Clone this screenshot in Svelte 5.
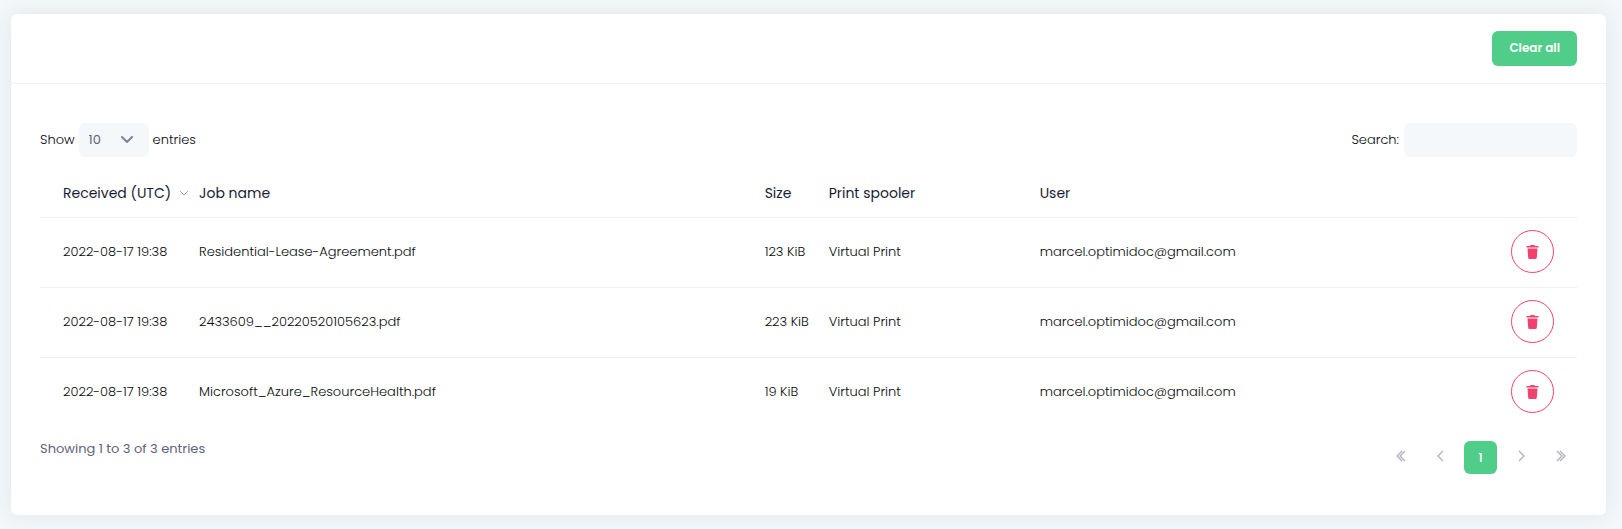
<script lang="ts">
  type Job = { received: string; name: string; size: string; spooler: string; user: string }

  let jobs: Job[] = [
    {
      received: '2022-08-17 19:38',
      name: 'Residential-Lease-Agreement.pdf',
      size: '123 KiB',
      spooler: 'Virtual Print',
      user: 'marcel.optimidoc@gmail.com',
    },
    {
      received: '2022-08-17 19:38',
      name: '2433609__20220520105623.pdf',
      size: '223 KiB',
      spooler: 'Virtual Print',
      user: 'marcel.optimidoc@gmail.com',
    },
    {
      received: '2022-08-17 19:38',
      name: 'Microsoft_Azure_ResourceHealth.pdf',
      size: '19 KiB',
      spooler: 'Virtual Print',
      user: 'marcel.optimidoc@gmail.com',
    },
  ]
  let search = ''
  let pageSize = 10

  $: filtered = jobs.filter((job) => job.name.toLowerCase().includes(search.toLowerCase()))
  $: shown = filtered.slice(0, pageSize)

  const removeJob = (job: Job) => {
    jobs = jobs.filter((j) => j !== job)
  }
</script>

<main class="card">
  <header class="card_header">
    <button class="clear_btn" on:click={() => (jobs = [])}>Clear all</button>
  </header>

  <div class="card_body">
    <div class="toolbar">
      <label class="length">
        Show
        <select bind:value={pageSize}>
          <option value={10}>10</option>
          <option value={25}>25</option>
          <option value={50}>50</option>
        </select>
        entries
      </label>
      <label class="search">
        Search:
        <input type="search" bind:value={search} />
      </label>
    </div>

    <table>
      <thead>
        <tr>
          <th class="received">
            <span class="sorted">
              Received (UTC)
              <svg width="10" height="6" viewBox="0 0 10 6"><path d="M1 1l4 4 4-4" /></svg>
            </span>
          </th>
          <th>Job name</th>
          <th class="size">Size</th>
          <th class="spooler">Print spooler</th>
          <th class="user">User</th>
          <th class="actions"></th>
        </tr>
      </thead>
      <tbody>
        {#each shown as job}
          <tr>
            <td class="received">{job.received}</td>
            <td>{job.name}</td>
            <td>{job.size}</td>
            <td>{job.spooler}</td>
            <td>{job.user}</td>
            <td class="actions">
              <button class="delete_btn" aria-label="Delete" on:click={() => removeJob(job)}>
                <svg width="13" height="14" viewBox="0 0 13 14">
                  <path d="M4.5 0h4l.5 1h3.5v1.5H.5V1H4z" />
                  <path d="M1.5 3.5h10l-.7 9a1.5 1.5 0 0 1-1.5 1.5H3.7a1.5 1.5 0 0 1-1.5-1.5z" />
                </svg>
              </button>
            </td>
          </tr>
        {/each}
      </tbody>
    </table>

    <footer class="table_footer">
      <span class="info">Showing 1 to {shown.length} of {filtered.length} entries</span>
      <nav class="pager">
        <button aria-label="First page" disabled>
          <svg width="10" height="12" viewBox="0 0 10 12"><path d="M6 1L1 6l5 5M9 1L4 6l5 5" /></svg>
        </button>
        <button aria-label="Previous page" disabled>
          <svg width="10" height="12" viewBox="0 0 10 12"><path d="M7 1L2 6l5 5" /></svg>
        </button>
        <button class="active">1</button>
        <button aria-label="Next page" disabled>
          <svg width="10" height="12" viewBox="0 0 10 12"><path d="M3 1l5 5-5 5" /></svg>
        </button>
        <button aria-label="Last page" disabled>
          <svg width="10" height="12" viewBox="0 0 10 12"><path d="M1 1l5 5-5 5M4 1l5 5-5 5" /></svg>
        </button>
      </nav>
    </footer>
  </div>
</main>

<style>
  :global(body) {
    background-color: #f3f7fa;
    font-family: Poppins, Inter, 'Open Sans', sans-serif;
    font-size: 13px;
    font-weight: 300;
    color: #070a0d;
  }
  button,
  select,
  input {
    font-family: inherit;
    font-size: 13px;
    border: none;
    border-radius: 6px;
    box-sizing: border-box;
  }
  button {
    display: inline-flex;
    align-items: center;
    justify-content: center;
    padding: 0;
    cursor: pointer;
  }
  .card {
    margin: 14px 16px 13px 11px;
    background-color: #fff;
    border-radius: 6px;
    box-shadow: 0 0 20px rgba(56, 71, 83, 0.09);
  }
  .card_header {
    display: flex;
    justify-content: flex-end;
    padding: 17px 29px;
    border-bottom: 1px solid #eff0f2;
  }
  .clear_btn {
    height: 35px;
    padding: 0 17px 2px;
    background-color: #50cd89;
    color: #fff;
    font-size: 12px;
    font-weight: 600;
  }
  .card_body {
    padding: 39px 29px 41px;
  }
  .toolbar {
    display: flex;
    justify-content: space-between;
  }
  .length,
  .search {
    display: flex;
    align-items: center;
    gap: 5px;
  }
  .length {
    gap: 4px;
  }
  select {
    appearance: none;
    width: 70px;
    height: 34px;
    padding: 0 10px 1px;
    color: #5e6278;
    background: #f5f8fa
      url("data:image/svg+xml,%3Csvg xmlns='http://www.w3.org/2000/svg' width='12' height='8' viewBox='0 0 12 8' fill='none' stroke='%237e8299' stroke-width='2' stroke-linecap='round' stroke-linejoin='round'%3E%3Cpath d='M1 1l5 5 5-5'/%3E%3C/svg%3E")
      no-repeat right 16px center;
  }
  input {
    width: 173px;
    height: 34px;
    padding: 0 10px;
    background-color: #f5f8fa;
  }
  table {
    width: 100%;
    table-layout: fixed;
    border-spacing: 0;
    margin-top: 12px;
  }
  th {
    height: 48px;
    padding: 0;
    font-size: 14px;
    font-weight: 400;
    text-align: left;
    color: #181c32;
    white-space: nowrap;
  }
  td {
    height: 67px;
    padding: 0 0 2px;
    border-top: 1px solid #eff0f2;
  }
  .received {
    width: 136px;
    padding-left: 23px;
  }
  .size {
    width: 64px;
  }
  .spooler {
    width: 211px;
  }
  .user {
    width: 28%;
  }
  .actions {
    width: 84px;
    padding-right: 23px;
    text-align: right;
  }
  .sorted {
    display: flex;
    align-items: center;
    gap: 8px;
  }
  .sorted svg,
  .pager svg {
    fill: none;
    stroke: #a9a9b8;
  }
  .pager svg {
    margin-bottom: 4px;
    stroke: #b0b0bf;
    stroke-width: 1.3;
  }
  .delete_btn {
    width: 43px;
    height: 43px;
    border: 1px solid #f1416c;
    border-radius: 50%;
    background-color: transparent;
    vertical-align: middle;
  }
  .delete_btn svg {
    fill: #f1416c;
  }
  .table_footer {
    display: flex;
    justify-content: space-between;
    margin-top: 14px;
  }
  .info {
    line-height: 16px;
    font-weight: 400;
    color: #5e6278;
  }
  .pager {
    display: flex;
    gap: 7px;
  }
  .pager button {
    width: 33px;
    height: 33px;
    background-color: transparent;
  }
  .pager .active {
    background-color: #50cd89;
    color: #fff;
    font-weight: 500;
  }
</style>
